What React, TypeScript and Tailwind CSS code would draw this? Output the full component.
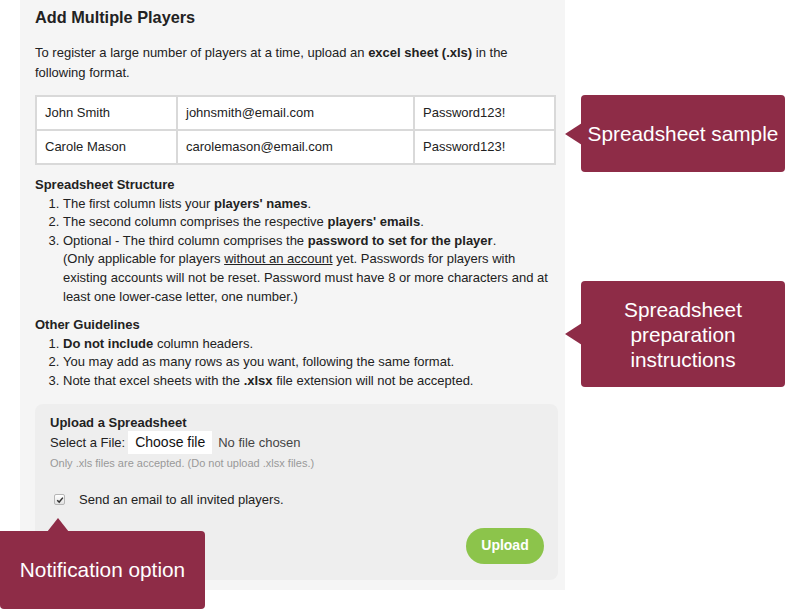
import React from "react";

const rows = [
  ["John Smith", "johnsmith@email.com", "Password123!"],
  ["Carole Mason", "carolemason@email.com", "Password123!"],
];

const Callout = ({
  className,
  arrow,
  children,
}: {
  className: string;
  arrow: "left" | "up";
  children: React.ReactNode;
}) => (
  <div className={`absolute bg-[#8e2c47] text-white rounded-[4px] flex items-center justify-center text-center ${className}`}>
    {arrow === "left" ? (
      <span className="absolute left-[-16px] top-1/2 -translate-y-1/2 w-0 h-0 border-y-[11px] border-y-transparent border-r-[17px] border-r-[#8e2c47]" />
    ) : (
      <span className="absolute top-[-13px] left-[47px] w-0 h-0 border-x-[11px] border-x-transparent border-b-[14px] border-b-[#8e2c47]" />
    )}
    {children}
  </div>
);

export default function App() {
  return (
    <div className="relative w-[786px] h-[610px] bg-white overflow-hidden text-[#222] font-['Liberation_Sans',Arial,sans-serif]">
      <div className="ml-[20px] w-[545px] h-[590px] bg-[#f5f5f5] pl-[15px] pr-[9px] pt-[6px]">
        <h2 className="text-[16.3px] font-bold leading-[22px]">Add Multiple Players</h2>
        <p className="mt-[15px] text-[13px] leading-[20px]">
          To register a large number of players at a time, upload an <b>excel sheet (.xls)</b> in the
          <br />
          following format.
        </p>

        <table className="mt-[12px] w-[521px] border-collapse bg-white text-[13px]">
          <tbody>
            {rows.map((r) => (
              <tr key={r[0]} className="h-[34px]">
                <td className="w-[141px] border-2 border-[#d9d9d9] px-[8px]">{r[0]}</td>
                <td className="w-[237px] border-2 border-[#d9d9d9] px-[8px]">{r[1]}</td>
                <td className="border-2 border-[#d9d9d9] px-[8px]">{r[2]}</td>
              </tr>
            ))}
          </tbody>
        </table>

        <div className="mt-[11px] text-[13px] leading-[18.6px]">
          <div className="font-bold">Spreadsheet Structure</div>
          <ol className="list-decimal pl-[28px]">
            <li>
              The first column lists your <b>players' names</b>.
            </li>
            <li>
              The second column comprises the respective <b>players' emails</b>.
            </li>
            <li>
              Optional - The third column comprises the <b>password to set for the player</b>.
              <br />
              (Only applicable for players <span className="underline">without an account</span> yet. Passwords for players with
              <br />
              existing accounts will not be reset. Password must have 8 or more characters and at
              <br />
              least one lower-case letter, one number.)
            </li>
          </ol>

          <div className="mt-[10px] font-bold">Other Guidelines</div>
          <ol className="list-decimal pl-[28px]">
            <li>
              <b>Do not include</b> column headers.
            </li>
            <li>You may add as many rows as you want, following the same format.</li>
            <li>
              Note that excel sheets with the <b>.xlsx</b> file extension will not be accepted.
            </li>
          </ol>
        </div>

        <div className="mt-[13px] w-[523px] h-[176px] bg-[#eeeeee] rounded-[8px] pl-[15px] pr-[14px] pt-[10px] text-[13px]">
          <div className="font-bold leading-[18px]">Upload a Spreadsheet</div>
          <div className="flex items-center h-[24px] -mt-[1px]">
            <span>Select a File:</span>
            <span className="ml-[3px] bg-white px-[7px] h-[23px] flex items-center text-[14px] text-[#111]">Choose file</span>
            <span className="ml-[6px] text-[13px] text-[#444]">No file chosen</span>
          </div>
          <div className="text-[11px] text-[#999] leading-[15px] mt-[1px]">Only .xls files are accepted. (Do not upload .xlsx files.)</div>
          <label className="flex items-center mt-[20px] h-[18px]">
            <span className="ml-[4px] w-[11px] h-[11px] rounded-[2px] border border-[#b5b5b5] bg-gradient-to-b from-white to-[#e2e2e2] flex items-center justify-center">
              <svg viewBox="0 0 10 10" className="w-[8px] h-[8px]">
                <path d="M1.5 5.2 L4 7.6 L8.6 2" fill="none" stroke="#333" strokeWidth="1.8" />
              </svg>
            </span>
            <span className="ml-[14px]">Send an email to all invited players.</span>
          </label>
          <div className="flex justify-end mt-[19px]">
            <button className="w-[78px] h-[36px] rounded-full bg-[#8cc44b] text-white font-bold text-[14px]">Upload</button>
          </div>
        </div>
      </div>

      <Callout arrow="left" className="left-[581px] top-[95px] w-[204px] h-[77px] text-[20.8px]">
        Spreadsheet sample
      </Callout>
      <Callout arrow="left" className="left-[581px] top-[281px] w-[204px] h-[106px] text-[20.8px] leading-[25px]">
        <span>
          Spreadsheet
          <br />
          preparation
          <br />
          instructions
        </span>
      </Callout>
      <Callout arrow="up" className="left-0 top-[531px] w-[205px] h-[78px] text-[20.8px] rounded-tl-none">
        Notification option
      </Callout>
    </div>
  );
}
